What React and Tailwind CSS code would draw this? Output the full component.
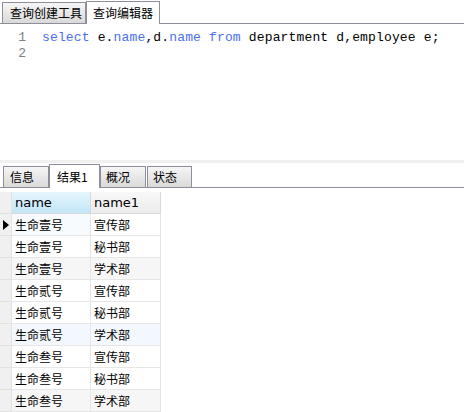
import React from 'react';

const cjk = { fontFamily: '"Noto Sans CJK SC", "Noto Sans", sans-serif' };
const mono = { fontFamily: '"Liberation Mono", "DejaVu Sans Mono", monospace' };

const rows = [
    ['生命壹号', '宣传部', 'bg-white'],
    ['生命壹号', '秘书部', 'bg-white'],
    ['生命壹号', '学术部', 'bg-[#f6f6f6]'],
    ['生命贰号', '宣传部', 'bg-white'],
    ['生命贰号', '秘书部', 'bg-white'],
    ['生命贰号', '学术部', 'bg-[#f2f8fd]'],
    ['生命叁号', '宣传部', 'bg-white'],
    ['生命叁号', '秘书部', 'bg-white'],
    ['生命叁号', '学术部', 'bg-[#f6f6f6]'],
];

function Tab({ label, active, className = '' }) {
    if (active) {
        return (
            <div className={`h-full flex items-center bg-white border-x border-t border-[#8e8e9a] -mb-px relative z-10 text-[12px] text-black ${className}`}>
                {label}
            </div>
        );
    }
    return (
        <div className={`h-[21px] flex items-center border border-b-0 border-[#8e8e9a] bg-gradient-to-b from-[#f6f6f6] to-[#d9d9d9] text-[12px] text-black ${className}`}>
            {label}
        </div>
    );
}

export default function App() {
    return (
        <div className="w-[464px] h-[412px] overflow-hidden bg-white flex flex-col" style={cjk}>
            {/* top tabs */}
            <div className="h-[24px] flex items-end border-b border-[#8e8e9a] pl-[2px] bg-white shrink-0">
                <Tab label="查询创建工具" className="w-[84px] pl-[7px]" />
                <Tab label="查询编辑器" active className="w-[74px] pl-[6px] h-[24px]" />
            </div>

            {/* editor */}
            <div className="h-[136px] shrink-0 flex pt-[6px] text-[13px] leading-[16px]" style={mono}>
                <div className="w-[32px] flex flex-col items-end pr-[6px] text-[#808080]">
                    <div>1</div>
                    <div>2</div>
                </div>
                <div className="pl-[10px] whitespace-pre text-black tracking-[0.15px]">
                    <span className="text-[#4a6ef0]">select</span> e.<span className="text-[#4a6ef0]">name</span>,d.<span className="text-[#4a6ef0]">name</span> <span className="text-[#4a6ef0]">from</span> department d,employee e;
                </div>
            </div>

            <div className="h-[3px] bg-[#f0f0f0] shrink-0" />

            {/* bottom tabs */}
            <div className="h-[25px] flex items-end border-b border-[#8e8e9a] pl-[3px] shrink-0">
                <Tab label="信息" className="w-[46px] pl-[6px]" />
                <Tab label="结果1" active className="w-[51px] pl-[7px] h-[25px]" />
                <Tab label="概况" className="w-[46px] pl-[5px]" />
                <Tab label="状态" className="w-[45px] pl-[5px] ml-[1px]" />
            </div>

            {/* grid */}
            <div className="pt-[4px] w-fit">
                <div className="flex h-[22px] text-[13px]" style={{ fontFamily: '"DejaVu Sans", sans-serif' }}>
                    <div className="w-[12px] bg-[#f0f0f0] border-r border-b border-[#e2e2e2]" />
                    <div className="w-[79px] flex items-center pl-[3px] bg-gradient-to-b from-[#e6f5fc] to-[#c2e6f8] border-r border-b border-[#d9d9d9]">name</div>
                    <div className="w-[70px] flex items-center pl-[3px] bg-gradient-to-b from-[#f8f8f8] to-[#ececec] border-r border-b border-[#d9d9d9]">name1</div>
                </div>
                {rows.map(([a, b, bg], i) => (
                    <div key={i} className={`flex h-[22px] text-[12px] ${bg}`}>
                        <div className="w-[12px] bg-[#f0f0f0] border-r border-b border-[#e2e2e2] flex items-center">
                            {i === 0 && (
                                <svg width="8" height="10" viewBox="0 0 8 10" className="ml-[2px]">
                                    <path d="M1 0 L7 5 L1 10 Z" fill="#000" />
                                </svg>
                            )}
                        </div>
                        <div className={`w-[79px] flex items-center pl-[3px] border-r border-b border-[#e6e6e6] ${i === 0 ? 'bg-[#f7fbfd]' : ''}`}>{a}</div>
                        <div className="w-[70px] flex items-center pl-[3px] border-r border-b border-[#e6e6e6]">{b}</div>
                    </div>
                ))}
            </div>
        </div>
    );
}
